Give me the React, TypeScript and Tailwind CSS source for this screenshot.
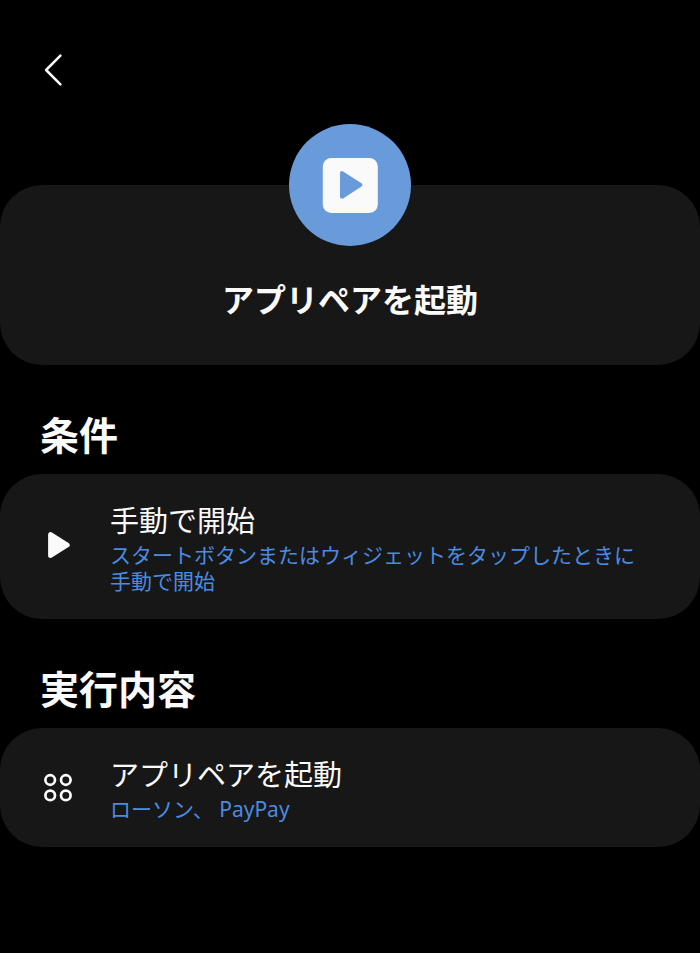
import React from 'react';

interface RoutineItem {
  icon: React.ReactNode;
  title: string;
  detail: string;
}

interface RoutineSectionProps {
  heading: string;
  items: RoutineItem[];
}

const BackIcon = () => (
  <svg className="w-8 h-9" viewBox="0 0 32 36" fill="none" stroke="#fafafa" strokeWidth="2.5" strokeLinecap="round" strokeLinejoin="round" aria-hidden="true">
    <path d="M20.4 3.6 6.1 18l14.3 14.4" />
  </svg>
);

const RoutineIcon = () => (
  <svg className="w-14 h-14" viewBox="0 0 56 56" aria-hidden="true">
    <rect x="0.8" y="0.9" width="55" height="55" rx="8.5" fill="#fafafa" />
    <path d="M20 16.1v23.6L38.4 27.9z" fill="#699bdb" stroke="#699bdb" strokeWidth="4" strokeLinejoin="round" />
  </svg>
);

const PlayIcon = () => (
  <svg className="w-8 h-8" viewBox="0 0 32 32" aria-hidden="true">
    <path d="M8.6 3.6v20.8L25.2 14z" fill="#fafafa" stroke="#fafafa" strokeWidth="5" strokeLinejoin="round" />
  </svg>
);

const AppPairIcon = () => (
  <svg className="w-8 h-8" viewBox="0 0 32 32" fill="none" stroke="#fafafa" strokeWidth="2.7" aria-hidden="true">
    <circle cx="8.2" cy="8" r="4.8" />
    <circle cx="23.8" cy="8" r="4.8" />
    <circle cx="8.2" cy="23.4" r="4.8" />
    <circle cx="23.8" cy="23.4" r="4.8" />
  </svg>
);

const conditions: RoutineItem[] = [
  {
    icon: <PlayIcon />,
    title: '手動で開始',
    detail: 'スタートボタンまたはウィジェットをタップしたときに手動で開始',
  },
];

const actions: RoutineItem[] = [
  { icon: <AppPairIcon />, title: 'アプリペアを起動', detail: 'ローソン、 PayPay' },
];

const RoutineSection: React.FC<RoutineSectionProps> = ({ heading, items }) => (
  <section>
    <h2 className="pt-[42px] pb-[11px] px-10 text-[39px] leading-[56px] font-bold">{heading}</h2>
    <ul className="bg-[#171717] rounded-[42px]">
      {items.map((item) => (
        <li key={item.title} className="flex items-center gap-9 py-[25px] pl-[42px] pr-12">
          <span className="shrink-0">{item.icon}</span>
          <div className="flex-1">
            <h3 className="text-[29px] leading-[43px] font-normal">{item.title}</h3>
            <p className="text-[21px] leading-[26px] text-[#4a8ce2]">{item.detail}</p>
          </div>
        </li>
      ))}
    </ul>
  </section>
);

export default function App() {
  return (
    <div
      lang="ja"
      className="min-h-screen bg-black text-[#fafafa] pb-12 font-['Noto_Sans','Noto_Sans_CJK_JP',sans-serif]"
    >
      {/* Header */}
      <header className="pt-[52px] pb-9 px-10">
        <button type="button" aria-label="戻る" className="block">
          <BackIcon />
        </button>
      </header>

      <main>
        {/* Routine summary */}
        <section className="mt-[61px] pb-[41px] flex flex-col items-center bg-[#171717] rounded-[42px]">
          <div className="-mt-[61px] w-[122px] h-[122px] rounded-full bg-[#699bdb] flex items-center justify-center">
            <RoutineIcon />
          </div>
          <h1 className="mt-[30px] text-[32px] leading-[48px] font-bold">アプリペアを起動</h1>
        </section>

        <RoutineSection heading="条件" items={conditions} />
        <RoutineSection heading="実行内容" items={actions} />
      </main>
    </div>
  );
}
